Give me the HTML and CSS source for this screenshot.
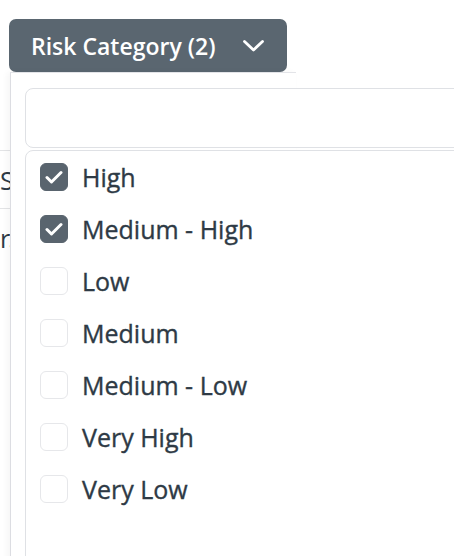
FILE: index.html
```html
<!DOCTYPE html>
<html lang="en">
<head>
<meta charset="utf-8">
<link rel="stylesheet" href="styles.css">
<title>Risk Category filter</title>
</head>
<body>
<div class="toolbar">
  <button class="filter-btn" type="button">
    <span class="filter-label">Risk Category (2)</span>
    <svg class="chev" width="21" height="12" viewBox="0 0 21 12"><polyline points="1.5,1.5 10.5,10 19.5,1.5" fill="none" stroke="#fff" stroke-width="2.8" stroke-linecap="round" stroke-linejoin="round"/></svg>
  </button>
</div>

<div class="bg-table">
  <div class="bg-row"><span class="bg-text">S</span></div>
  <div class="bg-row"><span class="bg-text tight">r.</span></div>
</div>

<div class="dropdown">
  <div class="search"></div>
  <ul class="options">
    <li class="option"><span class="box checked"><svg width="18" height="14" viewBox="0 0 18 14"><polyline points="2,7.5 6.5,12 16,2.5" fill="none" stroke="#fff" stroke-width="3" stroke-linecap="round" stroke-linejoin="round"/></svg></span><span class="opt-text">High</span></li>
    <li class="option"><span class="box checked"><svg width="18" height="14" viewBox="0 0 18 14"><polyline points="2,7.5 6.5,12 16,2.5" fill="none" stroke="#fff" stroke-width="3" stroke-linecap="round" stroke-linejoin="round"/></svg></span><span class="opt-text">Medium - High</span></li>
    <li class="option"><span class="box"></span><span class="opt-text">Low</span></li>
    <li class="option"><span class="box"></span><span class="opt-text">Medium</span></li>
    <li class="option"><span class="box"></span><span class="opt-text">Medium - Low</span></li>
    <li class="option"><span class="box"></span><span class="opt-text">Very High</span></li>
    <li class="option"><span class="box"></span><span class="opt-text">Very Low</span></li>
  </ul>
</div>
</body>
</html>
```

FILE: styles.css
```css
html, body {
  margin: 0;
  padding: 0;
  background: #ffffff;
  overflow: hidden;
  height: 556px;
}
body {
  font-family: "Open Sans", "Noto Sans", sans-serif;
  color: #2e3a45;
  position: relative;
}
.toolbar {
  padding: 19px 0 0 9px;
  display: flex;
}
.filter-btn {
  display: flex;
  align-items: center;
  height: 53px;
  width: 278px;
  box-sizing: border-box;
  padding: 0 23px 0 22px;
  gap: 26px;
  background: #5a6670;
  border: none;
  border-radius: 7px;
  color: #ffffff;
  font-family: "Open Sans", "Noto Sans", sans-serif;
  font-size: 23px;
  font-weight: 600;
  cursor: pointer;
}
.filter-label {
  white-space: nowrap;
  flex: 1;
  text-align: left;
}
.chev { display: block; }

.bg-table {
  margin-top: 78px;
}
.bg-row {
  height: 57px;
  border-top: 1px solid #e3e4e6;
  display: flex;
  align-items: center;
  font-size: 25px;
  color: #2e3a45;
  white-space: nowrap;
}
.bg-text.tight { letter-spacing: -2px; }

.dropdown {
  position: absolute;
  left: 10px;
  top: 72px;
  width: 286px;
  height: 520px;
  background: #ffffff;
  border-left: 1px solid #dcdde2;
  border-top: 1px solid #e3e4e8;
  box-shadow: -3px 0 6px rgba(0, 0, 0, 0.04);
  padding: 15px 0 0 14px;
  box-sizing: border-box;
}
.search {
  width: 520px;
  height: 60px;
  box-sizing: border-box;
  border: 1px solid #dfe1e5;
  border-radius: 8px;
  background: #ffffff;
}
.options {
  list-style: none;
  margin: 2px 0 0 0;
  padding: 0 0 0 14px;
  width: 520px;
  height: 500px;
  box-sizing: border-box;
  border: 1px solid #dfe1e5;
  border-radius: 8px;
  background: #ffffff;
}
.option {
  display: flex;
  align-items: center;
  gap: 14px;
  height: 52px;
  font-size: 25px;
  font-weight: 500;
  color: #2e3a45;
  white-space: nowrap;
  -webkit-text-stroke: 0.35px #2e3a45;
}
.box {
  width: 28px;
  height: 28px;
  box-sizing: border-box;
  border: 1px solid #e6e7ea;
  border-radius: 6px;
  background: #ffffff;
  display: flex;
  align-items: center;
  justify-content: center;
  flex: none;
}
.box.checked {
  background: #59646e;
  border-color: #59646e;
}
.box svg { display: block; }
```
